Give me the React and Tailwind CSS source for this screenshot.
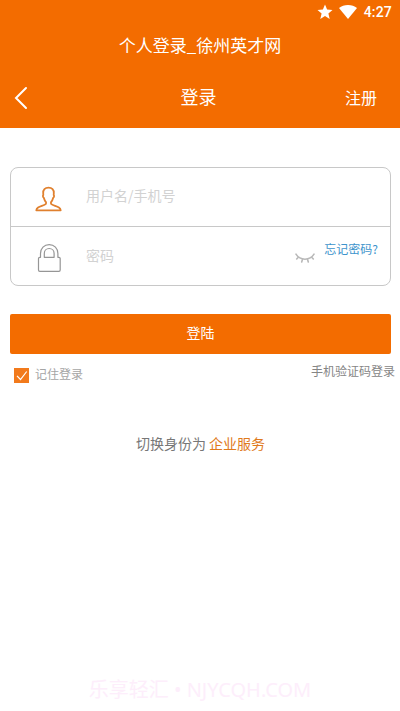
import { useState } from 'react';

const StatusBar = () => (
  <div className="flex h-6 items-center justify-end pr-2">
    <svg className="mr-[6px] h-4 w-4" viewBox="0 0 16 16" fill="#fff">
      <path d="M8 .6l2.100 5 5.400.5-4.100 3.500 1.300 5.300L8 12.100l-4.700 2.800 1.300-5.300L.5 6.100l5.400-.5z" />
    </svg>
    <svg className="mr-[7px] h-[14px] w-[18px]" viewBox="0 0 18 14" fill="#fff">
      <path d="M9 14L0 3C2.400 1.100 5.500 0 9 0s6.600 1.100 9 3z" />
    </svg>
    <span className="font-['Roboto',sans-serif] text-sm font-medium leading-6 tracking-[0.2px]">
      4:27
    </span>
  </div>
);

const UserIcon = () => (
  <svg
    className="h-[26px] w-[27px]"
    viewBox="0 0 27 26"
    fill="none"
    stroke="#e0802e"
    strokeWidth="1.800"
    strokeLinejoin="round"
  >
    <path d="M13.500 1.700c-3.600 0-5.500 2.100-5.300 5.400l.1 1.900c-.7.500-.4 2.300.5 2.800.5 2.100 1.300 3.400 2.300 4.600.3 1-.3 1.800-1.500 2.400-2.100 1-4.700 1.500-6.500 2.700-1.100.7-1.700 1.500-1.800 2.800h24.400c-.1-1.300-.7-2.100-1.800-2.800-1.800-1.200-4.400-1.700-6.500-2.700-1.200-.6-1.800-1.400-1.500-2.400 1-1.200 1.800-2.500 2.300-4.600.9-.5 1.200-2.300.5-2.800l.1-1.900c.2-3.300-1.700-5.400-5.300-5.400z" />
  </svg>
);

const LockIcon = () => (
  <svg
    className="h-7 w-6"
    viewBox="0 0 24 28"
    fill="none"
    stroke="#969696"
    strokeWidth="1.200"
    strokeLinejoin="round"
  >
    <path d="M3.500 13.300V9.500C3.500 4.300 7.200.7 12.200.7s8.700 3.600 8.700 8.800v3.800h1c.8 0 1.300.5 1.300 1.300v11.400c0 .8-.5 1.300-1.300 1.300H2.800c-.8 0-1.300-.5-1.300-1.300V14.600c0-.8.5-1.300 1.300-1.300z" />
    <path d="M7.300 13.300V9.500c0-3 2.100-5 4.900-5s4.900 2 4.900 5v3.800z" />
  </svg>
);

const ClosedEyeIcon = () => (
  <svg
    className="h-[10px] w-5"
    viewBox="0 0 20 10"
    fill="none"
    stroke="#b9b9b9"
    strokeWidth="1.600"
    strokeLinecap="round"
  >
    <path d="M1 1.200C3 4.400 6.200 6.200 10 6.200s7-1.800 9-5M3.500 4L1.700 6M7.500 6.200l-.8 2.700M12.500 6.200l.8 2.700M16.500 4l1.800 2" />
  </svg>
);

const App = () => {
  const [username, setUsername] = useState('');
  const [password, setPassword] = useState('');
  const [remember, setRemember] = useState(true);

  return (
    <div className="flex h-[711px] w-[400px] flex-col bg-white font-['Noto_Sans_CJK_SC',sans-serif]">
      <header className="h-32 bg-[#f36c00] text-white">
        <StatusBar />
        <h1 className="h-[43px] text-center text-[17px] leading-[41px]">
          个人登录_徐州英才网
        </h1>
        <div className="grid h-[60px] grid-cols-3 items-center pl-[14px] pr-[23px]">
          <button>
            <svg
              className="mt-px h-6 w-[14px]"
              viewBox="0 0 14 24"
              fill="none"
              stroke="#fff"
              strokeWidth="2"
              strokeLinecap="round"
            >
              <path d="M12 2L2 12l10 10" />
            </svg>
          </button>
          <h2 className="pb-0.5 pl-[6px] text-center text-lg leading-6">登录</h2>
          <a className="pb-px text-right text-base leading-6">注册</a>
        </div>
      </header>

      <form className="ml-[10px] mr-[9px] mt-[39px]">
        {/* Account fields */}
        <div className="h-[119px] rounded-lg border border-[#c8c8c8]">
          <div className="flex h-[59px] items-center border-b border-[#c8c8c8] pl-6">
            <div className="mt-1 w-[51px]">
              <UserIcon />
            </div>
            <input
              className="mb-1 w-48 text-sm outline-none placeholder:text-[#d2d2d2]"
              placeholder="用户名/手机号"
              value={username}
              onChange={(e) => setUsername(e.target.value)}
            />
          </div>
          <div className="flex h-[58px] items-center pl-[26px] pr-3">
            <div className="mt-1 w-[49px]">
              <LockIcon />
            </div>
            <input
              type="password"
              className="mb-[3px] w-[209px] text-sm outline-none placeholder:text-[#d2d2d2]"
              placeholder="密码"
              value={password}
              onChange={(e) => setPassword(e.target.value)}
            />
            <div className="mt-1">
              <ClosedEyeIcon />
            </div>
            <a className="mb-[14px] ml-auto whitespace-nowrap text-xs text-[#3d94cc]">
              忘记密码?
            </a>
          </div>
        </div>

        <button
          type="button"
          className="mt-7 block h-10 w-full rounded-[2px] bg-[#f36c00] pb-1 text-sm text-white"
        >
          登陆
        </button>
      </form>

      <div className="flex justify-between pl-[14px] pr-[5px]">
        <button
          className="mt-3 flex items-center"
          onClick={() => setRemember(!remember)}
        >
          <span className="mr-[6px] mt-[2px] h-[15px] w-[15px] bg-[#f27a1c]">
            {remember && (
              <svg viewBox="0 0 15 15" fill="none" stroke="#fff" strokeWidth="1.200">
                <path d="M3 7.800l3.500 3.700 6.200-8" />
              </svg>
            )}
          </span>
          <span className="pb-px text-xs text-[#a5a5a5]">记住登录</span>
        </button>
        <a className="mt-[9px] text-xs text-[#858585]">手机验证码登录</a>
      </div>

      <p className="mt-[50px] pl-px text-center text-sm text-[#777]">
        切换身份为 <a className="text-[#e07a1c]">企业服务</a>
      </p>

      <footer className="mb-[7px] mt-auto text-center font-['Noto_Sans','Noto_Sans_CJK_SC',sans-serif] text-xl leading-7 text-[#fdeefb]">
        乐享轻汇 • NJYCQH.COM
      </footer>
    </div>
  );
};

export default App;
